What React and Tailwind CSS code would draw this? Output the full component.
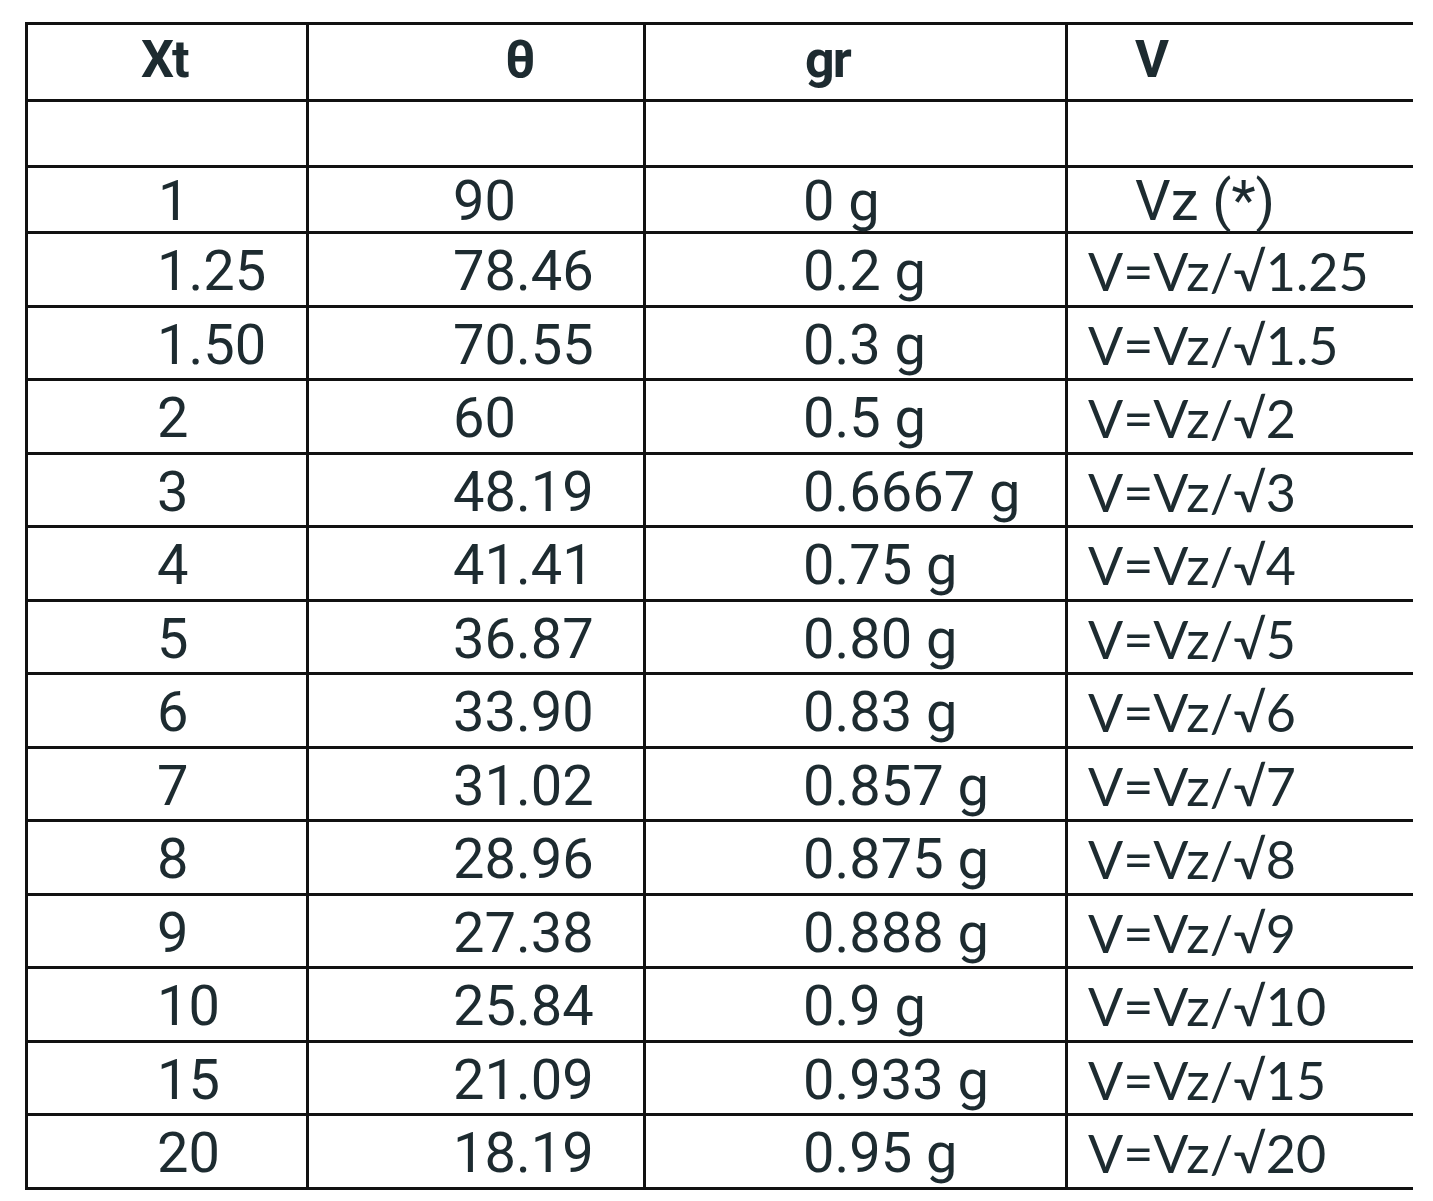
import React from "react";

const rows = [
  ["1.25", "78.46", "0.2 g", "V=Vz/√1.25"],
  ["1.50", "70.55", "0.3 g", "V=Vz/√1.5"],
  ["2", "60", "0.5 g", "V=Vz/√2"],
  ["3", "48.19", "0.6667 g", "V=Vz/√3"],
  ["4", "41.41", "0.75 g", "V=Vz/√4"],
  ["5", "36.87", "0.80 g", "V=Vz/√5"],
  ["6", "33.90", "0.83 g", "V=Vz/√6"],
  ["7", "31.02", "0.857 g", "V=Vz/√7"],
  ["8", "28.96", "0.875 g", "V=Vz/√8"],
  ["9", "27.38", "0.888 g", "V=Vz/√9"],
  ["10", "25.84", "0.9 g", "V=Vz/√10"],
  ["15", "21.09", "0.933 g", "V=Vz/√15"],
  ["20", "18.19", "0.95 g", "V=Vz/√20"],
];

const grid = "grid grid-cols-[281px_337px_422px_348px] border-t-[3px] border-[#111]";
const cell = "border-l-[3px] border-[#111] whitespace-nowrap";
const num = "font-['Roboto',sans-serif] text-[56px] leading-none";
const formula = "font-['Lato','Noto_Sans',sans-serif] text-[52px] leading-none";

function App() {
  return (
    <div className="min-h-screen bg-white pt-[22px] pl-[25px] text-[#1d2b30]">
      <div className="w-[1388px] border-b-[3px] border-[#111]">
        {/* header */}
        <div className={`${grid} h-[77px] font-['Roboto',sans-serif] text-[52px] font-bold leading-none tracking-[-2px]`}>
          <div className={`${cell} pl-[113px] pt-[9px]`}>Xt</div>
          <div className={`${cell} pl-[196px] pt-[9px]`}>θ</div>
          <div className={`${cell} pl-[159px] pt-[9px]`}>gr</div>
          <div className={`${cell} pl-[67px] pt-[9px]`}>V</div>
        </div>

        {/* empty row */}
        <div className={`${grid} h-[66px]`}>
          <div className={cell} />
          <div className={cell} />
          <div className={cell} />
          <div className={cell} />
        </div>

        <div className={`${grid} h-[66px]`}>
          <div className={`${cell} ${num} pl-[130px] pt-[5px]`}>1</div>
          <div className={`${cell} ${num} pl-[144px] pt-[5px]`}>90</div>
          <div className={`${cell} ${num} pl-[157px] pt-[5px]`}>0 g</div>
          <div className={`${cell} ${num} pl-[67px] pt-[5px]`}>Vz (*)</div>
        </div>

        {rows.map((r) => (
          <div key={r[0]} className={`${grid} h-[73.5px]`}>
            <div className={`${cell} ${num} pl-[129px] pt-[9px]`}>{r[0]}</div>
            <div className={`${cell} ${num} pl-[144px] pt-[9px]`}>{r[1]}</div>
            <div className={`${cell} ${num} pl-[157px] pt-[9px]`}>{r[2]}</div>
            <div className={`${cell} ${formula} pl-[20px] pt-[11px]`}>{r[3]}</div>
          </div>
        ))}
      </div>
    </div>
  );
}

export default App;
